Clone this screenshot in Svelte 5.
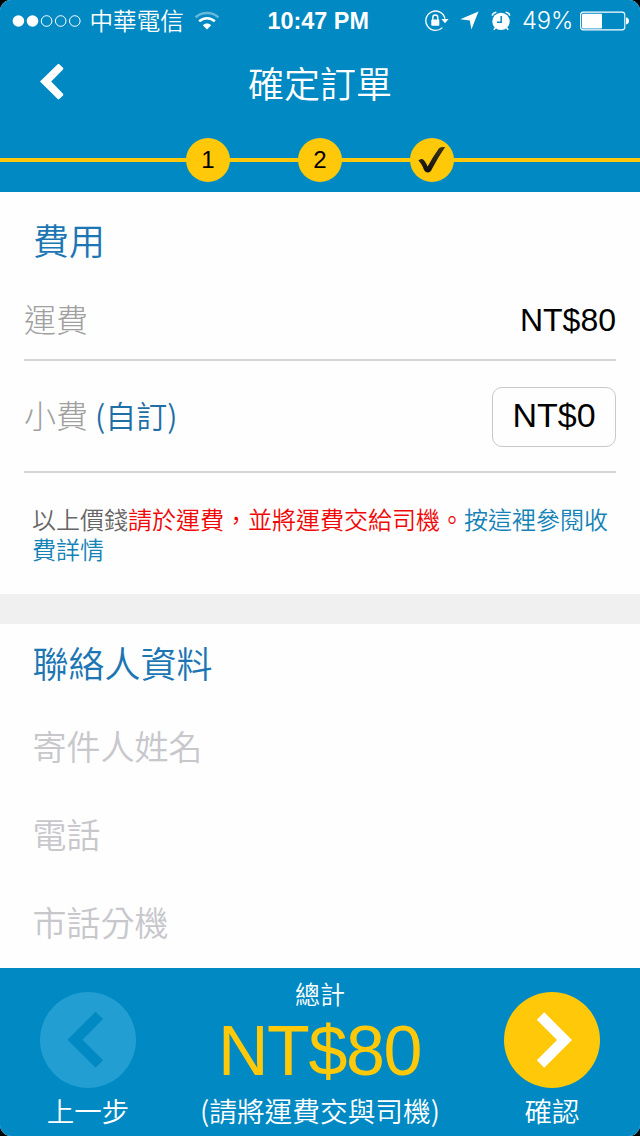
<script>
  const steps = ['1', '2'];
  const fields = ['寄件人姓名', '電話', '市話分機'];
  const signal = [true, true, false, false, false];
</script>

<div class="screen">
  <header>
    <div class="status">
      <svg class="dots" width="70" height="14" viewBox="0 0 70 14">
        {#each signal as on, i}
          <circle cx={6.4 + i * 14.1} cy="7" r={on ? 5.8 : 5.3} fill={on ? '#fff' : 'none'} stroke={on ? 'none' : '#fff'} stroke-width="1" />
        {/each}
      </svg>
      <span class="carrier">中華電信</span>
      <svg class="wifi" width="26" height="20" viewBox="0 0 26 20" fill="none">
        <path d="M1.6 6.4C7.5.6 18.5.6 24.4 6.4" stroke="#fff" stroke-opacity=".4" stroke-width="2.6" />
        <path d="M5.2 10.4C9.5 6.2 16.5 6.2 20.8 10.4" stroke="#fff" stroke-width="2.6" />
        <path d="M8.8 14.2C11 11.8 15 11.8 17.2 14.2L13 18.6Z" fill="#fff" />
      </svg>
      <span class="time">10:47 PM</span>
      <svg class="lock" width="24" height="22" viewBox="0 0 24 22" fill="none" stroke="#fff">
        <path d="M20 8.6A9.7 9.7 0 1 0 17.4 17.6" stroke-width="1.3" />
        <path d="M16.4 9H23.6L20 13.2Z" fill="#fff" stroke="none" />
        <path d="M7.8 10V7.4C7.8 4.2 12.8 4.2 12.8 7.4V10" stroke-width="1.4" />
        <rect x="6.3" y="9.5" width="8" height="6.2" rx=".6" fill="#fff" stroke="none" />
      </svg>
      <svg class="arrow" width="19" height="19" viewBox="0 0 19 19"><path d="M18.5.5 11.4 18.5 9.8 9.4.3 8.2Z" fill="#fff" /></svg>
      <svg class="alarm" width="20" height="20" viewBox="0 0 20 20" fill="none">
        <circle cx="10" cy="10.4" r="8.7" fill="#fff" />
        <path d="M1.2 4.6Q1.8 1.6 5.4 1.2M18.8 4.6Q18.2 1.6 14.6 1.2M4.6 16.5 2.8 18.8M15.4 16.5 17.2 18.8" stroke="#fff" stroke-width="1.5" />
        <path d="M10.2 5V11.2H6" stroke="#0089c2" stroke-width="1.5" />
      </svg>
      <span class="percent">49%</span>
      <svg class="battery" width="50" height="20" viewBox="0 0 50 20">
        <rect x=".6" y="1.1" width="44.2" height="17.8" rx="2.8" fill="none" stroke="#fff" stroke-width="1.1" />
        <rect x="2" y="2.8" width="20" height="14.6" rx="1" fill="#fff" />
        <path d="M46 6.6C50 6.6 50 13.4 46 13.4Z" fill="#fff" />
      </svg>
    </div>

    <div class="nav">
      <svg width="28" height="38" viewBox="0 0 28 38"><path d="M19.7 1.2Q20.5.5 21.3 1.2L25 4.8Q25.8 5.6 25 6.4L13.2 18.6 25 30.8Q25.8 31.6 25 32.4L21.3 36Q20.5 36.8 19.7 36L2 18.6Z" fill="#fff" /></svg>
      <h1>確定訂單</h1>
    </div>

    <div class="steps">
      {#each steps as step}
        <span class="step">{step}</span>
      {/each}
      <span class="step">
        <svg width="28" height="28" viewBox="0 0 28 28">
          <defs><linearGradient id="ink" x1="0" y1="1" x2="0" y2="0"><stop offset="0" stop-color="#111" /><stop offset="1" stop-color="#3c3416" /></linearGradient></defs>
          <path d="M.4 14.6Q2.2 12.4 4.8 13.2Q7.2 14.4 9.6 20.6Q15 10.4 21 2.2Q23 .6 27.2 1Q20.4 10.8 14.2 22.6Q12.6 26.4 10 26.6Q7.4 26.6 6 24Q3.6 17.4.4 14.6Z" fill="url(#ink)" />
        </svg>
      </span>
    </div>
  </header>

  <main>
    <section class="fees">
      <h2>費用</h2>
      <div class="row first"><span>運費</span><b>NT$80</b></div>
      <div class="row second"><span>小費 <a>(自訂)</a></span><b class="tip">NT$0</b></div>
      <p>以上價錢<em>請於運費，並將運費交給司機。</em><a>按這裡參閱收費詳情</a></p>
    </section>
    <section class="contact">
      <h2>聯絡人資料</h2>
      {#each fields as field}
        <div class="field">{field}</div>
      {/each}
    </section>
  </main>

  <footer>
    <div class="action">
      <svg width="96" height="96" viewBox="0 0 96 96"><circle cx="48" cy="48" r="48" fill="#239ed2" /><path d="M59.3 23.4 35 47.7 59.3 72" fill="none" stroke="#0089c2" stroke-width="10.5" /></svg>
      <span>上一步</span>
    </div>
    <div class="total">
      <span class="label">總計</span>
      <strong>NT$80</strong>
      <span class="hint">(請將運費交與司機)</span>
    </div>
    <div class="action">
      <svg width="96" height="96" viewBox="0 0 96 96"><circle cx="48" cy="48" r="48" fill="#ffc90a" /><path d="M36.5 24 60.5 48 36.5 72" fill="none" stroke="#fff" stroke-width="10.5" /></svg>
      <span>確認</span>
    </div>
  </footer>
</div>

<style>
  :global(body) { background: #000; }
  .screen {
    width: 640px;
    height: 1136px;
    display: flex;
    flex-direction: column;
    overflow: hidden;
    border-radius: 11px;
    background: #fefefe;
    font-family: "Noto Sans CJK TC", sans-serif;
    font-weight: 350;
  }
  svg { display: block; flex: none; }
  header { height: 192px; flex: none; background: #0089c2; color: #fff; }
  .status { height: 40px; display: flex; align-items: center; padding-left: 12px; white-space: nowrap; }
  .status svg { margin-top: 1px; }
  .carrier { width: 96px; margin-left: 7.5px; font-size: 23.6px; line-height: 40px; }
  .status .wifi { margin-left: 8px; margin-top: 2px; }
  .time { width: 103px; margin-left: 48px; font: bold 23.4px/40px "Liberation Sans", sans-serif; padding-top: 2px; }
  .lock { margin-left: 54.5px; }
  .arrow { margin-left: 11px; }
  .alarm { margin-left: 12px; }
  .percent { width: 52px; margin-left: 11px; padding-top: 2px; font: 300 23.8px/40px Inter, sans-serif; letter-spacing: -0.2px; }
  .battery { margin-left: 6px; }
  .nav { height: 84px; display: grid; grid-template-columns: 38px 1fr 38px; align-items: center; padding: 0 38px; box-sizing: border-box; }
  .nav h1 { margin: 0; text-align: center; font-size: 36px; line-height: 84px; height: 84px; font-weight: 350; }
  .steps {
    height: 68px;
    display: flex;
    justify-content: center;
    align-items: center;
    gap: 68px;
    background: linear-gradient(#ffc90a, #ffc90a) 0 34px / 100% 4px no-repeat;
  }
  .step {
    width: 44px;
    height: 44px;
    margin-top: 4px;
    border-radius: 50%;
    background: #ffc90a;
    color: #000;
    display: flex;
    align-items: center;
    justify-content: center;
    font: 24px/44px "Liberation Sans", sans-serif;
  }
  main { flex: 1; min-height: 0; }
  .fees { height: 402px; padding: 0 24px; box-sizing: border-box; }
  h2 { margin: 0; padding: 0 9px; font-size: 36px; line-height: 94px; height: 88px; font-weight: 350; color: #1c76b3; }
  .row { display: flex; justify-content: space-between; align-items: center; box-sizing: border-box; border-bottom: 2px solid #d6d6d6; font-size: 32px; font-weight: 300; color: #a0a0a0; }
  .row span { margin-top: -4px; }
  .row b { font: 32px/40px "Liberation Sans", sans-serif; color: #000; }
  .row a { color: #1f6ea6; font-size: 31px; font-weight: 350; }
  .first { height: 81px; }
  .second { height: 112px; }
  .row .tip { width: 124px; height: 60px; margin-top: 2px; box-sizing: border-box; border: 1px solid #c8c8c8; border-radius: 10px; text-align: center; font-size: 34px; line-height: 54px; }
  p { margin: 31px 0 0; padding: 0 0 0 8px; font-size: 24px; line-height: 30px; color: #666; }
  p em { font-style: normal; color: #f00808; }
  p a { color: #1583b7; }
  .contact { border-top: 30px solid #f0f0f0; }
  .contact h2 { height: 79px; padding-left: 32.5px; line-height: 77px; }
  .field { height: 88px; padding-left: 32.5px; font-size: 34px; line-height: 85px; color: #c7c7cc; }
  footer { height: 168px; flex: none; box-sizing: border-box; display: flex; justify-content: space-between; padding: 0 40px; background: #0089c2; color: #fff; }
  .action { width: 96px; display: flex; flex-direction: column; align-items: center; padding-top: 24px; }
  .action span { font-size: 27.5px; line-height: 44px; white-space: nowrap; }
  .total { display: flex; flex-direction: column; align-items: center; white-space: nowrap; }
  .label { font-size: 25px; line-height: 51px; height: 48px; }
  strong { font: 70px/70px "Liberation Sans", sans-serif; letter-spacing: -1.4px; margin-right: 1px; height: 72px; color: #ffc90a; }
  .hint { font-size: 27.7px; line-height: 44px; }
</style>
